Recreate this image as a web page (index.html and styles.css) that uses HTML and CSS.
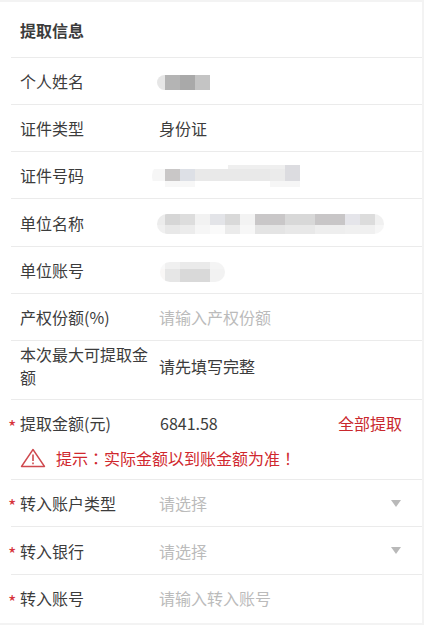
FILE: index.html
```html
<!DOCTYPE html>
<html lang="zh-CN">
<head>
  <meta charset="UTF-8">
  <title>提取信息</title>
  <link rel="stylesheet" href="styles.css">
</head>

<body>
  <div class="info-card">
    <div class="info-title">提取信息</div>
    <div class="info-row">
      <div class="row-label">个人姓名</div>
      <div class="row-value"><span class="mosaic mosaic-name"></span></div>
    </div>
    <div class="info-row">
      <div class="row-label">证件类型</div>
      <div class="row-value">身份证</div>
    </div>
    <div class="info-row">
      <div class="row-label">证件号码</div>
      <div class="row-value"><span class="mosaic mosaic-id"></span></div>
    </div>
    <div class="info-row row-48">
      <div class="row-label">单位名称</div>
      <div class="row-value"><span class="mosaic mosaic-company"></span></div>
    </div>
    <div class="info-row">
      <div class="row-label">单位账号</div>
      <div class="row-value"><span class="mosaic mosaic-account"></span></div>
    </div>
    <div class="info-row">
      <div class="row-label">产权份额(%)</div>
      <div class="row-value placeholder">请输入产权份额</div>
    </div>
    <div class="info-row row-tall">
      <div class="row-label">本次最大可提取金额</div>
      <div class="row-value">请先填写完整</div>
    </div>
    <div class="info-group">
      <div class="info-row row-plain required">
        <div class="row-label">提取金额(元)</div>
        <div class="row-value row-number">6841.58</div>
        <div class="row-action">全部提取</div>
      </div>
      <div class="info-hint" lang="zh-TW">
        <svg class="hint-icon" width="26" height="20" viewBox="0 0 26 20">
          <path d="M13 1.5 L24.5 18.5 L1.5 18.5 Z" fill="none" stroke="#cf4a4f" stroke-width="1.4" stroke-linejoin="round"/>
          <path d="M13 6.5 V13" stroke="#cf4a4f" stroke-width="1.6"/>
          <path d="M13 14.5 V16.2" stroke="#cf4a4f" stroke-width="1.6"/>
        </svg>
        提示：实际金额以到账金额为准！
      </div>
    </div>
    <div class="info-row required">
      <div class="row-label">转入账户类型</div>
      <div class="row-value placeholder">请选择</div>
      <div class="select-arrow"></div>
    </div>
    <div class="info-row row-48 required">
      <div class="row-label">转入银行</div>
      <div class="row-value placeholder">请选择</div>
      <div class="select-arrow"></div>
    </div>
    <div class="info-row row-last required">
      <div class="row-label">转入账号</div>
      <div class="row-value placeholder">请输入转入账号</div>
    </div>
  </div>
</body>
</html>
```

FILE: styles.css
```css
html {
  background: #f3f3f3;
}
html, body {
  margin: 0;
  height: 100%;
}
*,
*::before,
*::after {
  box-sizing: border-box;
}
body {
  padding: 2px 2px 3px 0;
  font-family: "Noto Sans CJK SC", "Liberation Sans", sans-serif;
  font-size: 16px;
  color: #3c3c3c;
}
.info-card {
  padding-left: 11px;
  background: #fff;
}
.info-title {
  height: 56px;
  padding: 11px 0 0 9px;
  line-height: 34px;
  font-weight: 700;
  border-bottom: 1px solid #ebebeb;
}
.info-row {
  position: relative;
  display: flex;
  align-items: center;
  height: 47px;
  padding-right: 20px;
  border-bottom: 1px solid #ebebeb;
}
.row-48 {
  height: 48px;
}
.row-tall {
  height: 59px;
  padding-bottom: 8px;
}
.row-tall .row-label {
  line-height: 23px;
}
.row-plain {
  padding-bottom: 2px;
  border-bottom: 0;
}
.row-last {
  height: 48px;
  padding-bottom: 2px;
  border-bottom: 0;
}
.info-group {
  height: 80px;
  border-bottom: 1px solid #ebebeb;
}
.row-label {
  flex: none;
  width: 148px;
  padding-left: 9px;
  line-height: 24px;
}
.row-value {
  flex: 1;
  line-height: 24px;
}
.row-number {
  padding-left: 1px;
}
.placeholder {
  color: #bbb;
}
.row-action {
  color: #c9282d;
}
.required::before {
  content: '*';
  position: absolute;
  left: -3px;
  top: 50%;
  margin-top: -10px;
  line-height: 24px;
  font-size: 18px;
  color: #d6333a;
}
.info-hint {
  display: flex;
  align-items: center;
  margin-top: -1px;
  padding-left: 9px;
  line-height: 24px;
  font-family: "Noto Sans CJK TC", "Liberation Sans", sans-serif;
  color: #d0282e;
}
.hint-icon {
  margin-right: 10px;
}
.select-arrow {
  width: 0;
  height: 0;
  margin-right: 1px;
  border-left: 5px solid transparent;
  border-right: 5px solid transparent;
  border-top: 7px solid #b9b9b9;
}

/* 打码区域，上下两排色块 */
.mosaic {
  display: block;
  background-repeat: no-repeat;
}
.mosaic-name {
  width: 53px;
  height: 15px;
  margin: 3px 0 0 -2px;
  border-radius: 8px 0 0 8px;
  background-image: linear-gradient(90deg, #e6e6e6 0 8px, #b4b4b4 8px 23px, #a9a9a9 23px 38px, #c4c4c4 38px);
}
.mosaic-id {
  width: 148px;
  height: 22px;
  margin: 2px 0 0 -7px;
  border-radius: 10px 0 0 10px;
  background-image:
    linear-gradient(90deg, #fff 0 76px, #efefef 76px 133px, #dcdce0 133px),
    linear-gradient(90deg, #f6f6f6 0 13px, #c9c7c7 13px 28px, #dde0e6 28px 43px, #e9e9e9 43px 118px, #ebebeb 118px 133px, #dcdce0 133px),
    linear-gradient(90deg, #fff 0 13px, #f7f7f7 13px 43px, #fff 43px 118px, #f6f6f6 118px);
  background-size: 100% 4px, 100% 12px, 100% 6px;
  background-position: 0 0, 0 4px, 0 16px;
}
.mosaic-company {
  width: 227px;
  height: 20px;
  margin: 3px 0 0 -2px;
  border-radius: 10px;
  background-image:
    linear-gradient(90deg, #ececec 0 8px, #d6d6d6 8px 23px, #dddddd 23px 38px, #f2f2f2 38px 53px, #e3e4e8 53px 68px, #d9d9d9 68px 83px, #f3f3f3 83px 98px, #c9c7c8 98px 128px, #d8d8d8 128px 158px, #c8c6c7 158px 188px, #e5e5ea 188px 203px, #dcdcdc 203px 218px, #f0f0f0 218px),
    linear-gradient(90deg, #f0f0f0 0 8px, #e8e8e8 8px 23px, #ececec 23px 38px, #f6f6f6 38px 53px, #fafafa 53px 68px, #ebebeb 68px 83px, #f7f7f7 83px 98px, #e4e4e4 98px 128px, #e8e8e8 128px 158px, #eeeeee 158px 188px, #f0f0f0 188px 218px, #f6f6f6 218px);
  background-size: 100% 11px, 100% 9px;
  background-position: 0 0, 0 11px;
}
.mosaic-account {
  width: 65px;
  height: 20px;
  margin: 4px 0 0 1px;
  border-radius: 10px;
  background-image:
    linear-gradient(90deg, #f9f9f9 0 5px, #f0f0f0 5px 20px, #eaeaea 20px 50px, #f4f4f4 50px),
    linear-gradient(90deg, #f9f7f6 0 5px, #e6e6e6 5px 20px, #d9d9d9 20px 50px, #f2f2f2 50px);
  background-size: 100% 7px, 100% 13px;
  background-position: 0 0, 0 7px;
}
```
